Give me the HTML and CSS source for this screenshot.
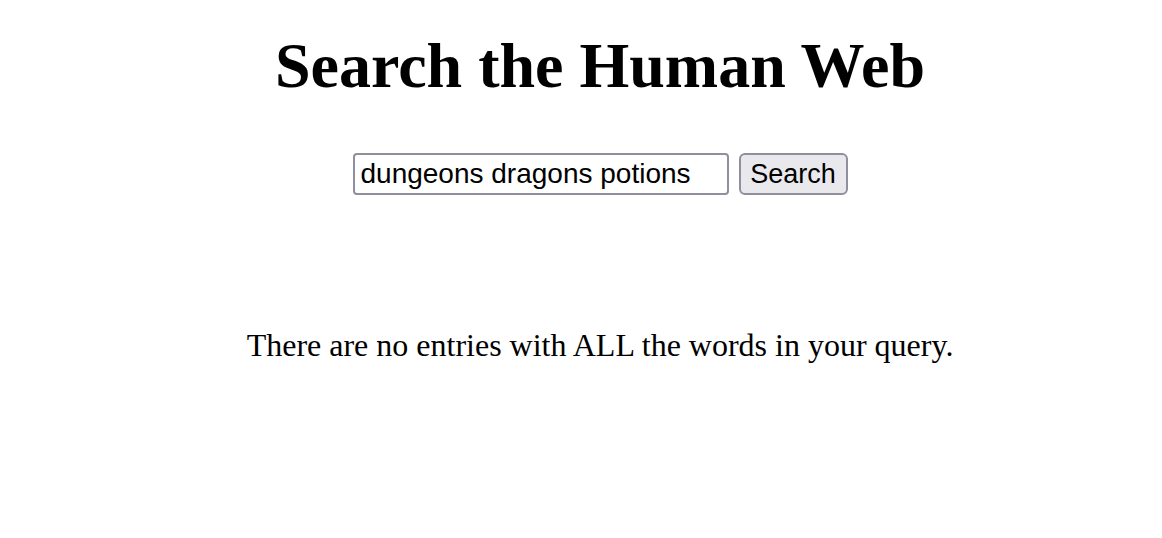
FILE: index.html
```html
<!DOCTYPE html>
<html>
<head>
    <meta charset="UTF-8">
    <title>Search the Human Web</title>
    <link rel="stylesheet" href="styles.css">
</head>
<body>
    <main class="page">
        <h1 class="title">Search the Human Web</h1>

        <form class="search-form">
            <input class="search-input" type="text" name="q" value="dungeons dragons potions">
            <button class="search-button" type="submit">Search</button>
        </form>

        <p class="no-results">There are no entries with ALL the words in your query.</p>
    </main>
</body>
</html>
```

FILE: styles.css
```css
body {
    margin: 0;
    padding: 0;
    background-color: #ffffff;
    color: #000000;
    font-family: "Liberation Serif", "Times New Roman", serif;
}
.page {
    padding-left: 38px;
    text-align: center;
}
.title {
    font-size: 64px;
    font-weight: bold;
    line-height: 1;
    margin: 0;
    padding-top: 34px;
}
.search-form {
    display: flex;
    justify-content: center;
    gap: 10px;
    margin-top: 55px;
}
.search-input {
    box-sizing: border-box;
    width: 376px;
    height: 42px;
    padding: 0 6px;
    border: 2px solid #8f8f9d;
    border-radius: 4px;
    font-family: "Liberation Sans", Arial, sans-serif;
    font-size: 28px;
    color: #000000;
}
.search-button {
    box-sizing: border-box;
    width: 109px;
    height: 42px;
    padding: 0;
    border: 2px solid #8f8f9d;
    border-radius: 6px;
    background-color: #e9e9ed;
    font-family: "Liberation Sans", Arial, sans-serif;
    font-size: 27px;
    color: #000000;
}
.no-results {
    font-size: 32px;
    margin: 0;
    padding-top: 132px;
}
```
